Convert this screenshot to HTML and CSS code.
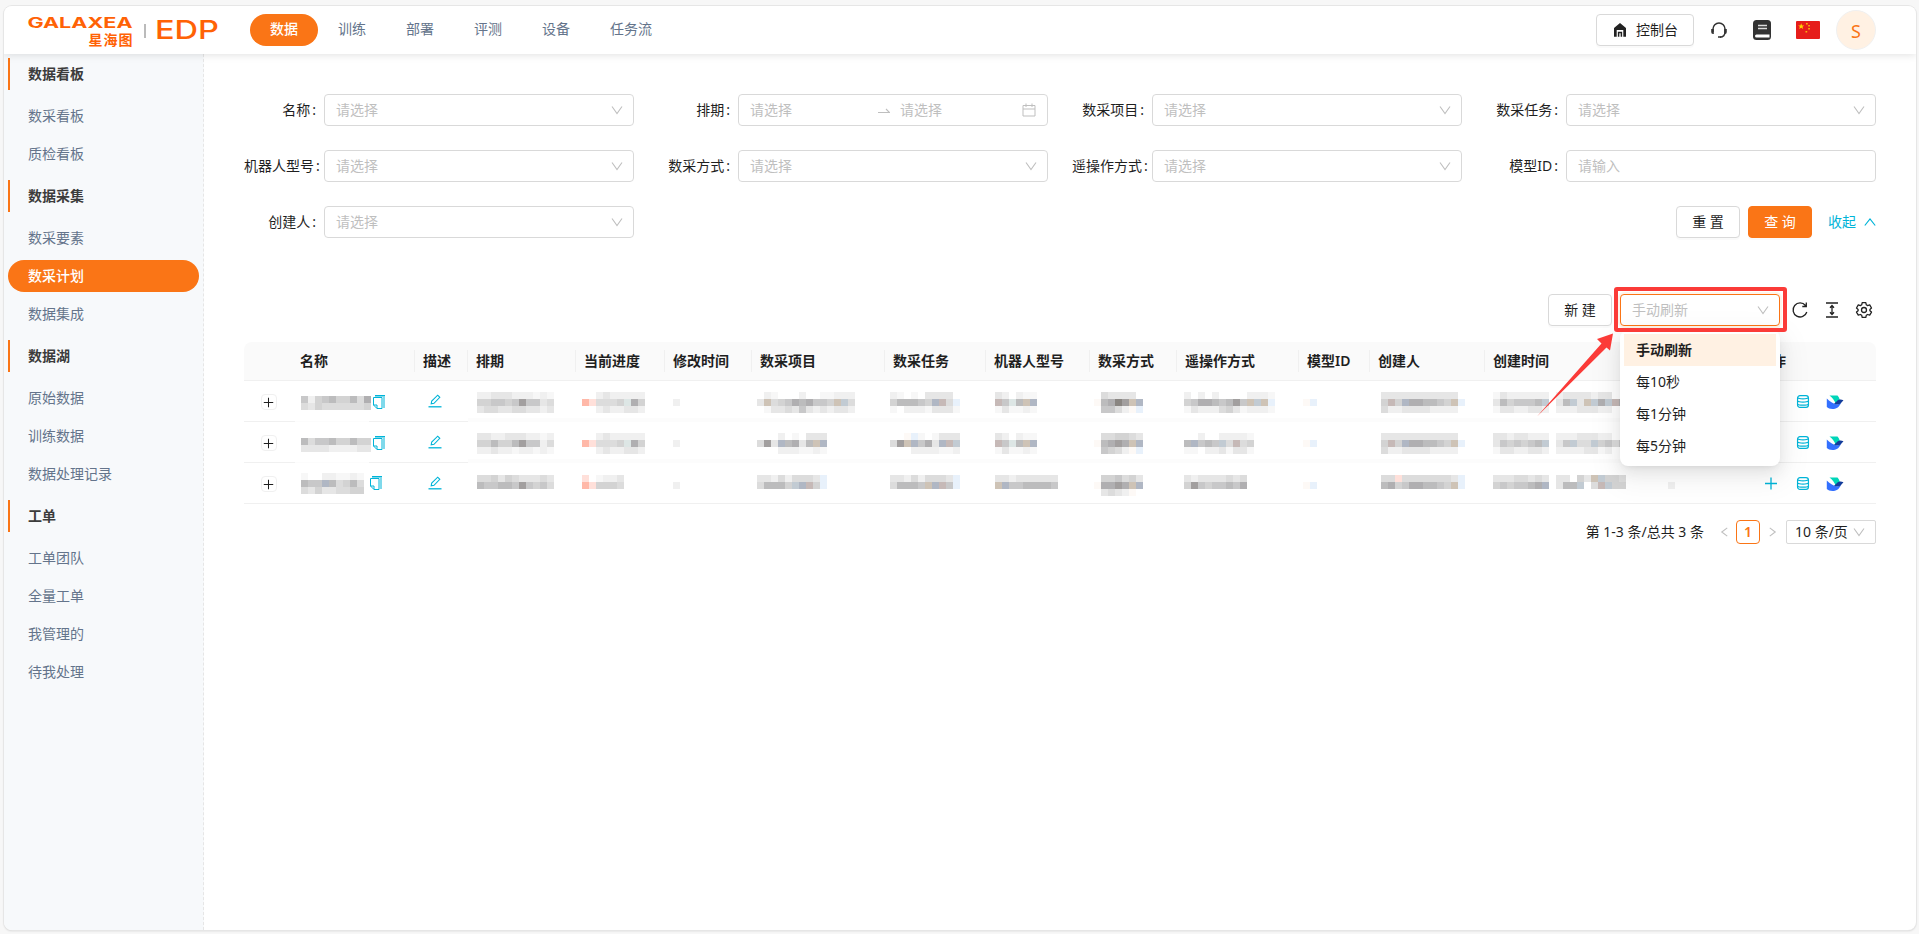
FILE: index.html
```html
<!DOCTYPE html>
<html lang="zh-CN">
<head>
<meta charset="utf-8">
<title>EDP</title>
<link rel="stylesheet" href="styles.css">
</head>
<body>
<svg width="0" height="0" class="defs">
  <symbol id="down" viewBox="0 0 12 12"><path d="M1 2.500 6 9.500 11 2.500" fill="none" stroke="currentColor" stroke-width="1.100"/></symbol>
  <symbol id="copy" viewBox="0 0 14 16"><path d="M3 1h10v13h-2V3H3z" fill="currentColor" opacity=".5"/><path d="M3 1.500h10" stroke="currentColor"/><path d="M1.500 3.500h8.500v11H5L1.500 11zM1.500 11H5v3.500" fill="#fff" stroke="currentColor"/></symbol>
  <symbol id="edit" viewBox="0 0 14 14"><path d="M3.200 9.800 3.700 7 9.700 1.200l2.100 2.100L6 9.300z" fill="none" stroke="currentColor" stroke-width="1.100"/><path d="M.5 12.800h13" stroke="currentColor" stroke-width="1.300"/></symbol>
  <symbol id="plus" viewBox="0 0 14 14"><path d="M7 1v12M1 7h12" stroke="currentColor" stroke-width="1.300"/></symbol>
  <symbol id="db" viewBox="0 0 14 16"><g fill="none" stroke="currentColor" stroke-width="1.300"><rect x="1.200" y="1.800" width="11.600" height="12.400" rx="2.600"/><path d="M1.500 4.200c1 1.300 10 1.300 11 0M1.500 7.600c1 1.300 10 1.300 11 0M1.500 11c1 1.300 10 1.300 11 0"/></g></symbol>
  <symbol id="bird" viewBox="0 0 18 16"><path d="M3.500 1.500h8c1.500 1.600 2 3.200 2.200 4.500L9.500 9.500C8.500 6.500 6.500 3.500 3.500 1.500z" fill="#00d6b9"/><path d="M.8 4.500C3.500 7.500 7 9.800 11.500 10.500L15 9c-2 4.500-5 6-8.500 6-2.500 0-4.500-1-5.700-2z" fill="#3370ff"/><path d="M17.500 6.300c-3-1.300-5-.8-7 1.200L8 9.700c2.800 1.200 5.500 1 7-.7z" fill="#133c9a"/></symbol>
</svg>

<div class="frame">
  <header class="header">
    <svg class="logo" width="200" height="44" viewBox="0 0 200 44">
      <text class="logo-en" x="3.500" y="19.500" textLength="105" lengthAdjust="spacingAndGlyphs">GALAXEA</text>
      <text class="logo-cn" x="64.500" y="37" textLength="44">星海图</text>
      <path d="M121 16v14" stroke="#bbb" stroke-width="2"/>
      <text class="logo-edp" x="131" y="31" textLength="64" lengthAdjust="spacingAndGlyphs">EDP</text>
    </svg>
    <nav class="nav">
      <a class="nav-item active">数据</a><a class="nav-item">训练</a><a class="nav-item">部署</a><a class="nav-item">评测</a><a class="nav-item">设备</a><a class="nav-item">任务流</a>
    </nav>
    <div class="tools">
      <button class="btn console">
        <svg width="14" height="14" viewBox="0 0 14 14"><path d="M7 0 13 5v8.700h-2.700V7H3.700v6.700H1V5z" fill="#222"/><path d="M5.600 13.700V9.500h2.800v4.200" fill="none" stroke="#222" stroke-width="1.500"/></svg>控制台
      </button>
      <svg class="headset" width="18" height="18" viewBox="0 0 18 18"><path d="M3 11V8a6 6 0 0 1 12 0v3c0 3-2 5-5 5.300" fill="none" stroke="#333" stroke-width="1.500"/><path d="M1.200 8h2.600v5H3A2 2 0 0 1 1.200 11zM14.200 8h2.600v3A2 2 0 0 1 15 13h-.8zM8 15.300h3v1.500H8z" fill="#333"/></svg>
      <svg class="book" width="18" height="20" viewBox="0 0 18 20"><rect width="18" height="20" rx="3.500" fill="#333"/><path d="M5 5.500h9M5 8.500h9" stroke="#ddd" stroke-width="1.400"/><path d="M3.500 14.500h13v3h-13a1.500 1.500 0 0 1 0-3z" fill="#fff"/></svg>
      <svg class="flag" width="24" height="18" viewBox="0 0 24 18"><rect width="24" height="18" rx="1" fill="#e61d1a"/><path d="m5.200 2.200.8 2.200h2.300L6.500 5.800l.7 2.300-2-1.400-2 1.400.7-2.300L2.100 4.400h2.300z" fill="#ffd500"/><path d="M10 2h1.700v1.500H10zm2.200 2h1.700v1.500h-1.700zm0 3h1.700v1.500h-1.700zM9.500 10h1.700v1.500H9.500z" fill="#f9b20c"/></svg>
      <span class="avatar">S</span>
    </div>
  </header>

  <div class="body">
    <aside class="side">
      <section class="group"><h3>数据看板</h3><a>数采看板</a><a>质检看板</a></section>
      <section class="group"><h3>数据采集</h3><a>数采要素</a><a class="on">数采计划</a><a>数据集成</a></section>
      <section class="group"><h3>数据湖</h3><a>原始数据</a><a>训练数据</a><a>数据处理记录</a></section>
      <section class="group"><h3>工单</h3><a>工单团队</a><a>全量工单</a><a>我管理的</a><a>待我处理</a></section>
    </aside>

    <main class="main">
      <form class="filters">
        <div class="field"><label>名称</label><div class="input">请选择<svg><use href="#down"/></svg></div></div>
        <div class="field"><label>排期</label><div class="input range"><span>请选择</span><svg class="swap" viewBox="0 0 12 10"><path d="M0 7.500h11.500L8 4" fill="none" stroke="currentColor" stroke-width="1.100"/></svg><span>请选择</span><svg class="cal" viewBox="0 0 14 14"><path d="M1 2.500h12v10.500H1zM1 6h12M4 .5v3.500M10 .5v3.500" fill="none" stroke="currentColor"/></svg></div></div>
        <div class="field"><label>数采项目</label><div class="input">请选择<svg><use href="#down"/></svg></div></div>
        <div class="field"><label>数采任务</label><div class="input">请选择<svg><use href="#down"/></svg></div></div>
        <div class="field"><label>机器人型号</label><div class="input">请选择<svg><use href="#down"/></svg></div></div>
        <div class="field"><label>数采方式</label><div class="input">请选择<svg><use href="#down"/></svg></div></div>
        <div class="field"><label>遥操作方式</label><div class="input">请选择<svg><use href="#down"/></svg></div></div>
        <div class="field"><label>模型ID</label><div class="input">请输入</div></div>
        <div class="field"><label>创建人</label><div class="input">请选择<svg><use href="#down"/></svg></div></div>
        <div class="actions"><button type="button" class="btn wide">重 置</button><button type="button" class="btn primary wide">查 询</button><a class="collapse">收起<svg viewBox="0 0 12 12"><path d="M.8 9.500 6 3l5.200 6.500" fill="none" stroke="currentColor" stroke-width="1.200"/></svg></a></div>
      </form>

      <div class="toolbar">
        <button class="btn wide">新 建</button>
        <div class="refresh">
          <div class="input focus">手动刷新<svg><use href="#down"/></svg></div>
          <ul class="menu"><li class="sel">手动刷新</li><li>每10秒</li><li>每1分钟</li><li>每5分钟</li></ul>
          <span class="mark"></span>
          <svg class="arrow" width="80" height="90" viewBox="1536 330 80 90"><path d="M1613 333.500 1610 350.500 1606.500 347.500 1537 416.500 1601.500 343.500 1597 339z" fill="#fb3b38"/></svg>
        </div>
        <div class="icons">
          <svg width="18" height="18" viewBox="0 0 18 18"><path d="M14.500 4.500A7 7 0 1 0 15.800 11M15.300 1.500v4h-4" fill="none" stroke="#222" stroke-width="1.300"/></svg>
          <svg width="18" height="18" viewBox="0 0 18 18"><path d="M3 2h12M3 16h12M9 5v8M7 6.700l2-2.200 2 2.200M7 11.300l2 2.200 2-2.200" fill="none" stroke="#222" stroke-width="1.300"/></svg>
          <svg width="18" height="18" viewBox="0 0 18 18"><path d="M7.200 1.700h3.600l.5 2.100 1.300.8 2.100-.7 1.800 3.100-1.600 1.400v1.300l1.600 1.400-1.800 3.100-2.100-.7-1.300.8-.5 2.100H7.200l-.5-2.100-1.300-.8-2.100.7-1.800-3.100 1.600-1.400V8.400L1.500 7l1.800-3.100 2.100.7 1.300-.8z" fill="none" stroke="#222" stroke-width="1.300" stroke-linejoin="round"/><circle cx="9" cy="9" r="2.500" fill="none" stroke="#222" stroke-width="1.300"/></svg>
        </div>
      </div>

      <table class="table">
        <colgroup id="cols"></colgroup>
        <thead><tr><th></th><th>名称</th><th>描述</th><th>排期</th><th>当前进度</th><th>修改时间</th><th>数采项目</th><th>数采任务</th><th>机器人型号</th><th>数采方式</th><th>遥操作方式</th><th>模型ID</th><th>创建人</th><th>创建时间</th><th>操作</th></tr></thead>
        <tbody id="rows"></tbody>
      </table>

      <div class="pager">
        <span class="total">第 1-3 条/总共 3 条</span>
        <span class="step"><svg viewBox="0 0 12 12"><path d="M9 1.500 3 6l6 4.500" fill="none" stroke="currentColor" stroke-width="1.200"/></svg></span>
        <span class="page">1</span>
        <span class="step"><svg viewBox="0 0 12 12"><path d="M3 1.500 9 6l-6 4.500" fill="none" stroke="currentColor" stroke-width="1.200"/></svg></span>
        <span class="size">10 条/页<svg><use href="#down"/></svg></span>
      </div>
    </main>
  </div>
</div>
<script src="table.js"></script>
</body>
</html>
```
FILE: table.js
```js
// Column widths in px.
const widths = [48, 123, 53, 108, 89, 87, 133, 101, 104, 87, 122, 71, 115, 265, 126];
document.getElementById('cols').innerHTML = widths.map(w => `<col style="width:${w}px">`).join('');

// Tones of the masked values, one character per 7px cell.
const tone = {
  1: '#f7f7f7', 2: '#f0f0f0', 3: '#e6e6e6', 4: '#dcdcdc', 5: '#d3d3d3', 6: '#c8c8c9', 7: '#bcbcbd', 8: '#b0afb1', 9: '#a29f9f',
  r: '#ffb8a8', q: '#ffe0da', b: '#c2cbd3', B: '#b0b7c4', p: '#c6b9b7', t: '#cec3b6', s: '#e8f1fb', w: '#fdf9f6', g: '#dde6e5', k: '#8a8682'
};
function mosaic(lines) {
  let out = '', n = 0;
  lines.forEach((line, y) => [...line].forEach((c, x) => {
    n = Math.max(n, x + 1);
    if (tone[c]) out += `<rect x="${x * 7}" y="${y * 7}" width="7" height="7" fill="${tone[c]}"/>`;
  }));
  return `<svg class="mosaic" width="${n * 7}" height="21" shape-rendering="crispEdges">${out}</svg>`;
}
// Cells by row, in column order; the name comes first.
const data = [
  [['6256755748', '4354444445'],
   ['22333222121', '55665696634', '34433443323'],
   ['002322222', 'rq4445g85', '002322332'], ['', '2'],
   ['02100020011222', '3t456878665tb4', '01334363232332'],
   ['2101033330', '57776t5Bp4s'.replace('t', ''), '1022213331'],
   ['320211', 'p6g7tB', '131121'],
   ['0433330', 'w78k9tB', '06642ws'],
   ['2020200002221', '568876796tbts', '1322245312221'],
   ['', 'ws'],
   ['0333333333330', '05p5B887765ts', '0422333322220'],
   ['13222222023333233', '3756667b037b3tb8bp8', '13322332022233322']],
  [['7466755755', '3333222233'],
   ['33223332212', '55755796624', '22322122121'],
   ['002322222', 'rq4445g85', '002322332'], ['', '2'],
   ['0002010333', '493B7837tB', '0002221121'],
   ['00ws101333', '49tB683Bpb', '0002222112'],
   ['320211', 'p6g7tB', '131121'],
   ['0445543', 'w7898tB', '06542ws'],
   ['0020022221', '7B676b4p45', '1102231331'],
   ['', 'ws'],
   ['0333333333330', '05p5B887765ts', '0422333322220'],
   ['33233222022233322', '3656567b036b44b5646', '13322332022223312']],
  [['100221121', '766B74574', '435334455'],
   ['44535433343', '76677696564'],
   ['q01223', 'rq5554'], ['', '2'],
   ['332424443s', '47775bBp5s'],
   ['332424443s', '47776tBp6s'],
   ['332333333', 'tB6677776'],
   ['0556453', 'w8898tB', '03432w0'],
   ['323333434', '596566768'],
   ['', 'ws'],
   ['044q44444443s', '07856887765ts'],
   ['33344343033053tb554', '5656678B0377b04pb55', '']]
];
// One stray cell in the unnamed column area of the last row.
data[2][11][1] += '0000002';
const shift = [1, 1, -2, 0, -3, -3, 1, -4, -1, -4, -4, 0];

document.getElementById('rows').innerHTML = data.map((row, i) => {
  const cell = k => `<td class="masked"><div class="m" style="margin-left:${shift[k]}px">${mosaic(row[k])}</div></td>`;
  return `<tr class="r${i + 1}"><td><span class="expand"><svg><use href="#plus"/></svg></span></td>
    <td class="name"><div>${mosaic(row[0])}<svg class="copy"><use href="#copy"/></svg></div></td>
    <td><svg class="edit"><use href="#edit"/></svg></td>
    ${row.slice(1).map((_, k) => cell(k + 1)).join('')}
    <td><div class="ops"><svg><use href="#plus"/></svg><svg><use href="#db"/></svg><svg class="bird"><use href="#bird"/></svg></div></td></tr>`;
}).join('');
```
FILE: styles.css
```css
* { box-sizing: border-box; }
body {
  margin: 0; height: 934px; padding: 6px 3px 4px 4px; overflow: hidden; background: #f7f7f7;
  font: 14px/22px "Noto Sans", "Noto Sans CJK SC", sans-serif; color: #1f1f1f;
}
.defs { position: absolute; }
svg { display: block; flex: none; }
.frame { height: 924px; border-radius: 8px; background: #fff; box-shadow: 0 0 0 1px #e6e6e6, 0 1px 2px #ccc; overflow: hidden; display: flex; flex-direction: column; }
.header { height: 48px; flex: none; display: flex; align-items: center; padding: 0 40px 0 20px; box-shadow: 0 1px 8px rgba(0,0,0,.12); position: relative; z-index: 1; background: #fff; }
.logo { margin-right: 26px; overflow: visible; }
.logo text { fill: #ff6205; font-family: Inter, sans-serif; }
.logo .logo-en { font-size: 14px; font-weight: 700; }
.logo .logo-cn { font: 700 14px "Noto Sans CJK SC", sans-serif; }
.logo .logo-edp { font-size: 25px; font-weight: 500; }
.nav { display: flex; margin-top: -1px; }
.nav-item { height: 32px; padding: 0 20px; line-height: 30px; border-radius: 16px; color: #64748b; }
.nav-item.active { background: #fa7516; color: #fff; font-weight: 500; }
.tools { margin-left: auto; display: flex; align-items: center; }
.btn { height: 32px; padding: 0 15px; border: 1px solid #d9d9d9; border-radius: 4px; background: #fff; font: inherit; color: #1f1f1f; line-height: 28px; box-shadow: 0 2px 0 rgba(0,0,0,.02); white-space: nowrap; }
.btn.wide { width: 64px; padding: 0; }
.btn.primary { background: #fa7516; border-color: #fa7516; color: #fff; }
.console { display: flex; align-items: center; gap: 9px; width: 98px; padding: 0 0 0 16px; }
.headset { margin-left: 16px; }
.book { margin-left: 25px; }
.flag { margin-left: 25px; }
.avatar { margin-left: 16px; width: 40px; height: 40px; border-radius: 50%; background: #fff1e3; border: 1px solid #f0f0f0; text-align: center; font-size: 18px; line-height: 41px; color: #fa7516; }

.body { flex: 1; display: flex; min-height: 0; }
.side { width: 200px; flex: none; background: #f7f9fb; border-right: 1px dashed #e6e6e6; padding: 4px; display: flex; flex-direction: column; gap: 10px; }
.group { display: flex; flex-direction: column; gap: 6px; }
.group h3 { margin: 0 0 4px; height: 32px; border-left: 2px solid #fa7516; padding-left: 18px; font-size: 14px; line-height: 31px; font-weight: 600; color: #3c3c3c; }
.group a { height: 32px; padding-left: 20px; line-height: 31px; color: #64748b; border-radius: 16px; }
.group a.on { background: #fa7516; color: #fff; font-weight: 500; }

.main { flex: 1; padding: 40px 40px 0; }
.filters { display: grid; grid-template-columns: repeat(4, minmax(0, 1fr)); gap: 24px; }
.field { display: flex; min-width: 0; }
.field label { width: 80px; flex: none; text-align: right; white-space: nowrap; line-height: 31px; }
.field label::after { content: ":"; margin: 0 8px 0 2px; }
.input { flex: 1; min-width: 0; height: 32px; border: 1px solid #d9d9d9; border-radius: 4px; padding: 0 10px 0 11px; display: flex; align-items: center; justify-content: space-between; color: #bfbfbf; background: #fff; line-height: 28px; }
.input svg { width: 12px; height: 12px; }
.range span { width: 128px; }
.range .swap { margin-right: 10px; height: 10px; }
.range span:nth-of-type(2) { flex: 1; width: auto; }
.range .cal { width: 14px; height: 14px; margin-right: 1px; }
.actions { grid-column: 4; display: flex; justify-content: flex-end; gap: 8px; }
.collapse { display: flex; align-items: center; gap: 8px; margin-left: 8px; color: #00b4d8; }
.collapse svg { width: 12px; height: 12px; }

.toolbar { margin: 56px 0 16px; display: flex; justify-content: flex-end; gap: 8px; height: 32px; }
.refresh { width: 160px; position: relative; }
.input.focus { border-color: #fa7516; box-shadow: 0 0 0 2px rgba(255,150,50,.1); }
.menu { position: absolute; z-index: 2; top: 36px; left: 0; width: 160px; margin: 0; padding: 4px; list-style: none; background: #fff; border-radius: 8px; box-shadow: 0 6px 16px rgba(0,0,0,.08), 0 3px 6px -4px rgba(0,0,0,.12), 0 9px 28px 8px rgba(0,0,0,.05); }
.menu li { height: 32px; padding-left: 12px; line-height: 31px; }
.menu .sel { background: #fff1e3; font-weight: 600; }
.mark { position: absolute; z-index: 3; inset: -7px -7px -6px -6px; border: 4px solid #fb3b38; border-radius: 3px; }
.arrow { position: absolute; z-index: 3; left: -84px; top: 36px; }
.icons { display: flex; align-items: center; gap: 14px; margin: 0 3px; }

.table { width: 1632px; table-layout: fixed; border-collapse: separate; border-spacing: 0; }
th { height: 39px; padding: 0 8px; text-align: left; font-weight: 600; line-height: 36px; background: linear-gradient(#f0f0f0, #f0f0f0) right center / 1px 22px no-repeat #fafafa; border-bottom: 1px solid #f0f0f0; white-space: nowrap; }
th:first-child { border-top-left-radius: 8px; background: #fafafa; }
th:last-child { border-top-right-radius: 8px; background: #fafafa; }
td { height: 41px; padding: 0 8px; border-bottom: 1px solid #f0f0f0; vertical-align: middle; }
tr:not(.r3) .masked { border-bottom-color: #fcfcfc; background: linear-gradient(#fcfcfc, #fcfcfc) bottom / 100% 3px no-repeat; }
tr:not(.r3) .name { border-bottom: 0; background: linear-gradient(90deg, #f0f0f0 3px, #fcfcfc 3px, #fcfcfc 77px, #f0f0f0 77px) bottom / 100% 1px no-repeat; }
.m { height: 21px; margin-top: 3px; }
.r3 .m { margin-top: 5px; }
.mosaic { overflow: visible; }
.name > div { display: flex; gap: 2px; height: 16px; margin-left: 1px; }
.name .mosaic { margin: 2px -1px 0 0; }
.r1 .name .mosaic { margin-top: 2px; }
.r2 .name .mosaic { margin-top: 3px; }
.r3 .name .mosaic { margin-top: -2px; margin-right: 3px; }
.copy { width: 14px; height: 16px; color: #00b4d8; }
.edit { width: 14px; height: 14px; margin-left: 5px; color: #00b4d8; }
.expand { width: 16px; height: 16px; margin: 2px 0 0 8.5px; border: 1px solid #f0f0f0; border-radius: 4px; display: flex; align-items: center; justify-content: center; }
.expand svg { width: 11px; height: 11px; }
.ops { display: flex; align-items: center; gap: 17px; padding-left: 6px; color: #00b4d8; }
.ops svg { width: 14px; height: 15px; }
.ops svg + svg { margin-left: 1px; }
.ops .bird { width: 18px; height: 16px; margin: 1px 0 0 -1px; }

.pager { margin-top: 16px; height: 24px; display: flex; align-items: center; justify-content: flex-end; }
.total { margin-right: 8px; line-height: 22px; }
.step { width: 24px; display: flex; justify-content: center; color: #bfbfbf; }
.step svg { width: 11px; height: 12px; }
.page { width: 24px; height: 24px; border: 1px solid #fa7516; border-radius: 4px; color: #fa7516; font-weight: 600; text-align: center; line-height: 22px; }
.size { width: 90px; height: 24px; margin-left: 2px; border: 1px solid #d9d9d9; padding: 0 10px 0 8px; border-radius: 2px; display: flex; align-items: center; justify-content: space-between; line-height: 22px; }
.size svg { width: 12px; height: 12px; color: #bfbfbf; }
```
